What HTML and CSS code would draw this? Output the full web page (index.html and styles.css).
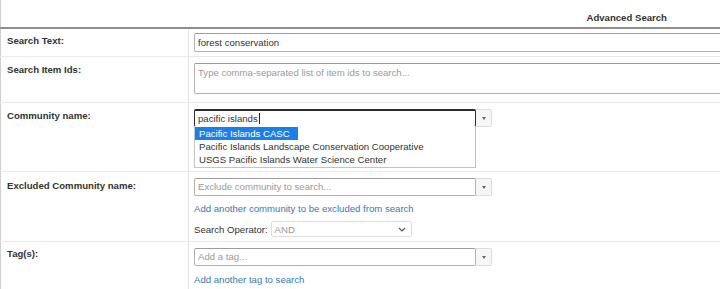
FILE: index.html
```html
<!DOCTYPE html>
<html lang="en">
<head>
    <meta charset="UTF-8">
    <meta name="viewport" content="width=device-width, initial-scale=1.0">
    <title>Advanced Search</title>
    <link rel="stylesheet" href="styles.css">
</head>
<body>
    <table class="search-table">
        <colgroup>
            <col class="col-label">
            <col class="col-field">
        </colgroup>
        <thead>
            <tr>
                <th colspan="2" class="title">Advanced Search</th>
            </tr>
        </thead>
        <tbody>
            <tr class="row-text">
                <td class="label">Search Text:</td>
                <td class="field">
                    <div class="text-input">forest conservation</div>
                </td>
            </tr>
            <tr class="row-ids">
                <td class="label">Search Item Ids:</td>
                <td class="field">
                    <div class="text-area placeholder">Type comma-separated list of item ids to search...</div>
                </td>
            </tr>
            <tr class="row-community">
                <td class="label">Community name:</td>
                <td class="field">
                    <div class="combo">
                        <div class="combo-input focused">pacific islands<span class="caret"></span></div>
                        <div class="combo-btn"><span class="arrow"></span></div>
                        <ul class="suggestions">
                            <li><span class="active">Pacific Islands CASC</span></li>
                            <li>Pacific Islands Landscape Conservation Cooperative</li>
                            <li>USGS Pacific Islands Water Science Center</li>
                        </ul>
                    </div>
                </td>
            </tr>
            <tr class="row-excluded">
                <td class="label">Excluded Community name:</td>
                <td class="field">
                    <div class="combo">
                        <div class="combo-input placeholder">Exclude community to search...</div>
                        <div class="combo-btn"><span class="arrow"></span></div>
                    </div>
                    <a class="add-link" href="#">Add another community to be excluded from search</a>
                    <div class="operator">
                        <span>Search Operator:</span>
                        <div class="select">
                            <span>AND</span>
                            <svg width="8" height="5" viewBox="0 0 8 5"><path d="M1 1l3 3 3-3" fill="none" stroke="#555" stroke-width="1.2"/></svg>
                        </div>
                    </div>
                </td>
            </tr>
            <tr class="row-tags">
                <td class="label">Tag(s):</td>
                <td class="field">
                    <div class="combo">
                        <div class="combo-input placeholder">Add a tag...</div>
                        <div class="combo-btn"><span class="arrow"></span></div>
                    </div>
                    <a class="add-link" href="#">Add another tag to search</a>
                </td>
            </tr>
        </tbody>
    </table>
</body>
</html>
```

FILE: styles.css
```css
body {
    margin: 0;
    overflow: hidden;
    background-color: #ffffff;
    font-family: "Liberation Sans", Arial, sans-serif;
    font-size: 9.6px;
    color: #333;
}

.search-table {
    width: 740px;
    table-layout: fixed;
    border-collapse: collapse;
    border-left: 1px solid #cfcfcf;
}

.col-label {
    width: 188px;
}

.title {
    height: 28px;
    box-sizing: border-box;
    padding: 12px 73px 0 0;
    text-align: right;
    vertical-align: top;
    line-height: 11px;
    font-weight: bold;
    border-bottom: 2px solid #8e8e8e;
}

tbody tr {
    border-bottom: 1px solid #e9e9e9;
}

.label {
    vertical-align: top;
    padding: 7px 6px 0 6px;
    line-height: 11px;
    font-weight: bold;
    border-right: 1px solid #e6e6e6;
}

.field {
    vertical-align: top;
    padding: 5px 0 5px 5px;
}

.row-text .label { padding-top: 6px; }
.row-text .field { padding: 4px 0 4px 5px; }
.row-ids .field { padding: 6px 0 8px 5px; }
.row-community .field { padding: 6px 0 44px 5px; }
.row-excluded .label { padding-top: 8px; }
.row-excluded .field { padding: 6px 0 4px 5px; }
.row-tags .label { padding-top: 6px; }
.row-tags .field { padding-top: 6px; }
.row-tags .add-link { margin-top: 8px; }

.text-input,
.text-area,
.combo-input {
    box-sizing: border-box;
    border: 1px solid #b2b2b2;
    border-top-color: #9c9c9c;
    border-radius: 2px;
    padding: 0 3px;
    line-height: 16px;
    color: #333;
    white-space: nowrap;
    overflow: hidden;
}

.text-input {
    height: 19px;
    line-height: 17px;
}

.text-area {
    height: 31px;
    line-height: 15px;
    padding-top: 1px;
}

.placeholder {
    color: #9a9a9a;
}

.combo {
    position: relative;
    display: flex;
    width: 298px;
}

.combo-input {
    width: 282px;
    height: 18px;
}

.combo-input.focused {
    border: 1px solid #2b2b2b;
    border-top-width: 2px;
    line-height: 15px;
}

.caret {
    display: inline-block;
    width: 1px;
    height: 11px;
    margin-left: 1px;
    vertical-align: -2px;
    background-color: #222;
}

.combo-btn {
    box-sizing: border-box;
    width: 16px;
    height: 18px;
    border: 1px solid #dcdcdc;
    border-left: none;
    border-radius: 0 2px 2px 0;
    background-color: #f6f6f6;
    display: flex;
    align-items: center;
    justify-content: center;
}

.arrow {
    width: 0;
    height: 0;
    border-left: 2.5px solid transparent;
    border-right: 2.5px solid transparent;
    border-top: 3px solid #666;
}

.suggestions {
    position: absolute;
    top: 17px;
    left: 0;
    width: 282px;
    box-sizing: border-box;
    margin: 0;
    padding: 1px 0 1px 0;
    list-style: none;
    background-color: #fff;
    border: 1px solid #c4c4c4;
    border-top: none;
    line-height: 13px;
}

.suggestions li {
    padding: 0 4px;
    white-space: nowrap;
}

.suggestions .active {
    display: inline-block;
    margin-left: -4px;
    padding: 0 4px;
    width: 95px;
    background-color: #1c7fe8;
    color: #fff;
}

.add-link {
    display: block;
    margin-top: 7px;
    line-height: 12px;
    color: #3a78b5;
    text-decoration: none;
}

.operator {
    display: flex;
    align-items: center;
    gap: 3px;
    margin-top: 6px;
}

.select {
    box-sizing: border-box;
    width: 141px;
    height: 16px;
    border: 1px solid #dedede;
    border-radius: 2px;
    padding: 0 5px 0 3px;
    display: flex;
    align-items: center;
    justify-content: space-between;
    color: #999;
}
```
